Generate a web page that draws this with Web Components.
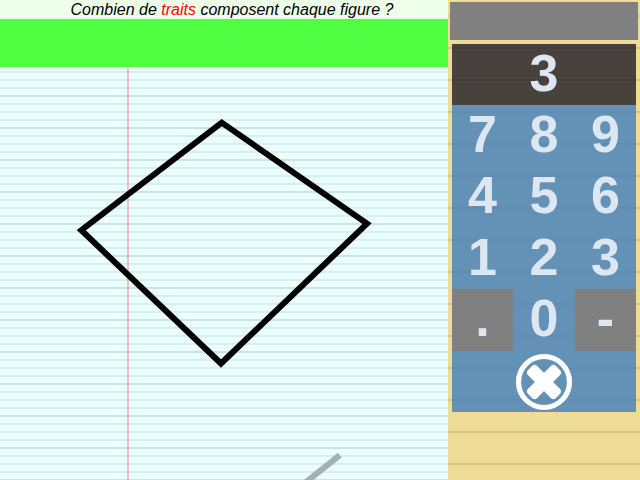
<!DOCTYPE html>
<html lang="fr">
<head>
<meta charset="utf-8">
<title>Combien de traits</title>
<style>
html,body{margin:0;width:640px;height:480px;overflow:hidden;font-family:"Liberation Sans",Arial,sans-serif}
</style>
</head>
<body>
<math-exercise></math-exercise>
<script>
const define = (name, html) => customElements.define(name, class extends HTMLElement {
  constructor() {
    super();
    this.attachShadow({mode: "open"}).innerHTML = html;
  }
});

define("question-bar", `<style>
:host{display:block;height:19px;line-height:19px;background:#eeffea;text-align:center;font-size:16px;font-style:italic;color:#000;white-space:nowrap;box-sizing:border-box;padding-left:16px}
</style><slot></slot>`);

define("status-band", `<style>:host{display:block;height:48px;background:#51ff42}</style>`);

define("figure-canvas", `<style>
:host{display:block;flex:1;min-height:0}
svg{display:block}
</style>
<svg width="448" height="413" viewBox="0 67 448 413" fill="none" stroke-width="6">
<path d="M221.7 122.6L367 223.6L221 363.5L81.3 230.2Z" stroke="#000"/>
<path d="M339.8 455.2L289.8 495" stroke="#a3b1b1"/>
</svg>`);

define("paper-sheet", `<style>
:host{display:flex;flex-direction:column;width:448px;height:480px;
background:
linear-gradient(rgba(255,0,0,.24),rgba(255,0,0,.24)) 127px 0/2px 100% no-repeat,
linear-gradient(#cfe1e1 2px,transparent 2px) 0 -1px/100% 32px,
linear-gradient(#d9eef2 2px,transparent 2px) 0 -1px/100% 8px,
#ecffff}
</style><slot></slot>`);

define("result-box", `<style>:host{display:block;height:38px;background:#808080;margin:0 2px}</style>`);

define("pad-key", `<style>
:host{display:flex;align-items:center;justify-content:center;background:rgba(69,128,189,.82);color:#dde7f2;font-size:52px;font-weight:bold;line-height:60px;box-sizing:border-box;padding-bottom:4px}
:host([display]){grid-column:1/4;background:rgba(36,32,40,.82)}
:host([off]){background:#808080}
:host([wide]){grid-column:1/4;padding:0}
</style><slot></slot>`);

define("clear-icon", `<style>:host{display:block;width:58px;height:58px}svg{display:block}</style>
<svg width="58" height="58" viewBox="-29 -29 58 58">
<circle r="25.5" fill="none" stroke="#fff" stroke-width="5.2"/>
<g fill="#fff">
<rect x="-19.7" y="-6.4" width="39.4" height="12.8" rx="3.6" transform="rotate(45)"/>
<rect x="-19.7" y="-6.4" width="39.4" height="12.8" rx="3.6" transform="rotate(-45)"/>
</g>
</svg>`);

define("number-pad", `<style>
:host{display:grid;width:184px;height:368px;margin:4px auto 0;grid-template-columns:61px 62px 61px;grid-template-rows:61px 61px 62px 61px 62px 61px}
</style>
<pad-key display>3</pad-key>
<pad-key>7</pad-key><pad-key>8</pad-key><pad-key>9</pad-key>
<pad-key>4</pad-key><pad-key>5</pad-key><pad-key>6</pad-key>
<pad-key>1</pad-key><pad-key>2</pad-key><pad-key>3</pad-key>
<pad-key off>.</pad-key><pad-key>0</pad-key><pad-key off>-</pad-key>
<pad-key wide><clear-icon></clear-icon></pad-key>`);

define("answer-panel", `<style>
:host{display:block;width:192px;height:480px;box-sizing:border-box;padding-top:2px;
background:linear-gradient(#d5c485 2px,transparent 2px) 0 15px/100% 32px,#eedc97}
</style><slot></slot>`);

define("math-exercise", `<style>:host{display:flex;width:640px;height:480px}</style>
<paper-sheet>
<question-bar>Combien de <span style="color:#f00">traits</span> composent chaque figure ?</question-bar>
<status-band></status-band>
<figure-canvas></figure-canvas>
</paper-sheet>
<answer-panel><result-box></result-box><number-pad></number-pad></answer-panel>`);
</script>
</body>
</html>
